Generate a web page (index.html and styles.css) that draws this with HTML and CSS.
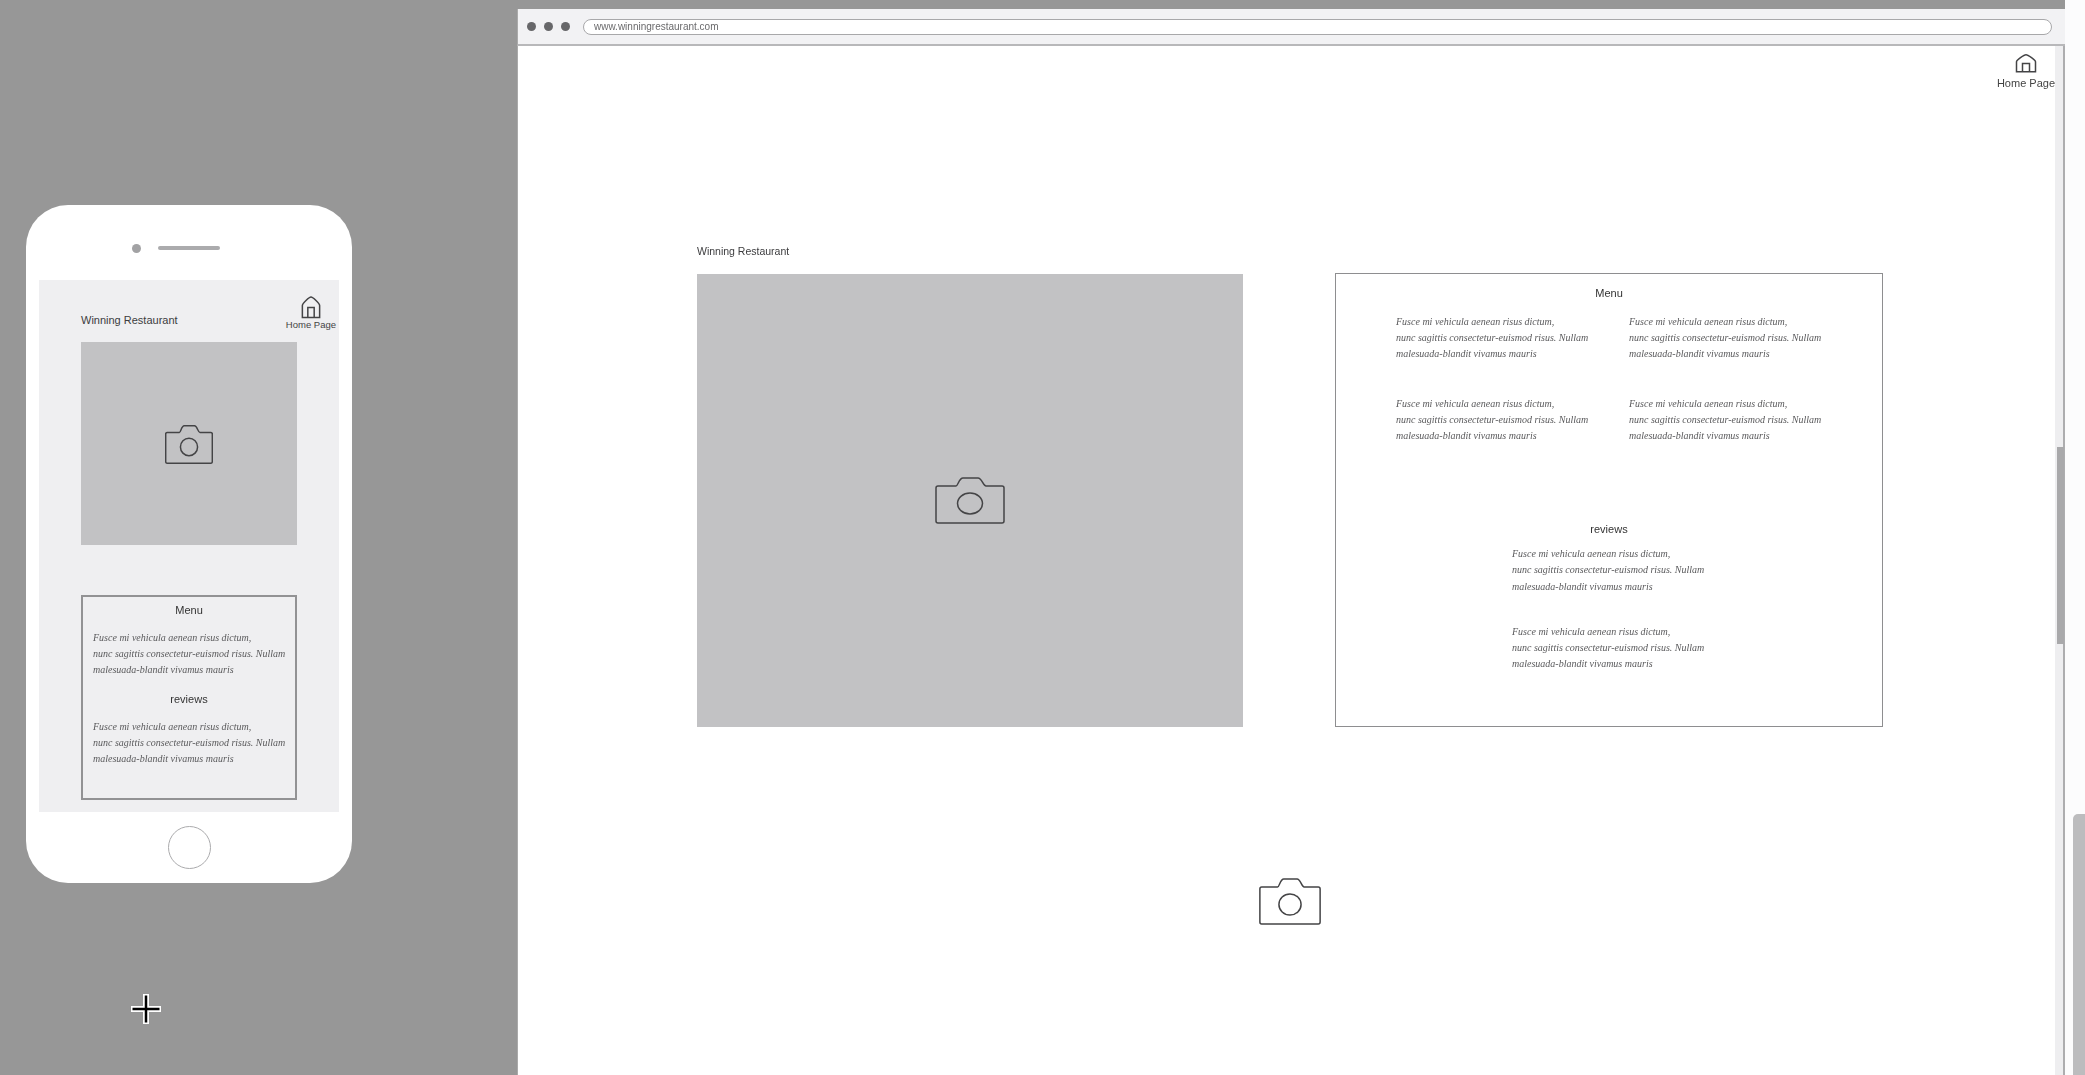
FILE: index.html
```html
<!DOCTYPE html>
<html lang="en">
<head>
<meta charset="utf-8">
<title>Winning Restaurant wireframe</title>
<link rel="stylesheet" href="styles.css">
</head>
<body>
<svg class="defs" width="0" height="0" aria-hidden="true">
  <symbol id="camera" viewBox="0 0 70 47" preserveAspectRatio="none">
    <path class="line" d="M3 9H21C23 9 24 1 28 1H43C47 1 48 9 51 9H67C68.500 9 69 10 69 11V44C69 45.500 68.500 46 67 46H3C1.500 46 1 45.500 1 44V11C1 10 1.500 9 3 9Z"/>
    <ellipse class="line" cx="35" cy="26.500" rx="12.500" ry="10.500"/>
  </symbol>
  <symbol id="house" viewBox="0 0 22 23" preserveAspectRatio="none">
    <path class="line" d="M1.500 21.500V9.500C1.500 7.500 9 1 11 1S20.500 7.500 20.500 9.500V21.500Z"/>
    <path class="line" d="M7.500 21.500V11.500H14.500V21.500"/>
  </symbol>
</svg>
<div class="stage">
  <div class="left">
    <div class="phone">
      <div class="phone-top">
        <span class="lens"></span>
        <span class="speaker"></span>
      </div>
      <div class="screen">
        <div class="phone-header">
          <div class="title">Winning Restaurant</div>
          <div class="home home-small">
            <svg class="icon-house-small"><use href="#house"/></svg>
            <span>Home Page</span>
          </div>
        </div>
        <div class="photo photo-small">
          <svg class="camera-small"><use href="#camera"/></svg>
        </div>
        <div class="panel panel-small">
          <div class="heading">Menu</div>
          <div class="copy">
            <span>Fusce mi vehicula aenean risus dictum,</span>
            <span>nunc sagittis consectetur-euismod risus. Nullam</span>
            <span>malesuada-blandit vivamus mauris</span>
          </div>
          <div class="heading heading-mid">reviews</div>
          <div class="copy">
            <span>Fusce mi vehicula aenean risus dictum,</span>
            <span>nunc sagittis consectetur-euismod risus. Nullam</span>
            <span>malesuada-blandit vivamus mauris</span>
          </div>
        </div>
      </div>
      <div class="phone-bottom"><span class="home-button"></span></div>
    </div>
  </div>
  <div class="browser">
    <div class="chrome">
      <div class="dots"><span></span><span></span><span></span></div>
      <div class="url">www.winningrestaurant.com</div>
    </div>
    <div class="viewport">
      <div class="track"><div class="thumb"></div></div>
      <div class="top-row">
        <div class="home home-large">
          <svg class="icon-house-large"><use href="#house"/></svg>
          <span>Home Page</span>
        </div>
      </div>
      <div class="content">
        <div class="title title-large">Winning Restaurant</div>
        <div class="columns">
          <div class="photo photo-large">
            <svg class="camera-large"><use href="#camera"/></svg>
          </div>
          <div class="panel panel-large">
            <div class="heading">Menu</div>
            <div class="menu-grid">
              <div class="copy">
                <span>Fusce mi vehicula aenean risus dictum,</span>
                <span>nunc sagittis consectetur-euismod risus. Nullam</span>
                <span>malesuada-blandit vivamus mauris</span>
              </div>
              <div class="copy">
                <span>Fusce mi vehicula aenean risus dictum,</span>
                <span>nunc sagittis consectetur-euismod risus. Nullam</span>
                <span>malesuada-blandit vivamus mauris</span>
              </div>
              <div class="copy">
                <span>Fusce mi vehicula aenean risus dictum,</span>
                <span>nunc sagittis consectetur-euismod risus. Nullam</span>
                <span>malesuada-blandit vivamus mauris</span>
              </div>
              <div class="copy">
                <span>Fusce mi vehicula aenean risus dictum,</span>
                <span>nunc sagittis consectetur-euismod risus. Nullam</span>
                <span>malesuada-blandit vivamus mauris</span>
              </div>
            </div>
            <div class="heading heading-reviews">reviews</div>
            <div class="review-list">
              <div class="copy">
                <span>Fusce mi vehicula aenean risus dictum,</span>
                <span>nunc sagittis consectetur-euismod risus. Nullam</span>
                <span>malesuada-blandit vivamus mauris</span>
              </div>
              <div class="copy">
                <span>Fusce mi vehicula aenean risus dictum,</span>
                <span>nunc sagittis consectetur-euismod risus. Nullam</span>
                <span>malesuada-blandit vivamus mauris</span>
              </div>
            </div>
          </div>
        </div>
      </div>
      <div class="lower">
        <svg class="camera-lower"><use href="#camera"/></svg>
      </div>
    </div>
  </div>
  <div class="gutter"><div class="gutter-bar"></div></div>
</div>
<svg class="cursor" viewBox="0 0 30 30" aria-hidden="true">
  <path class="cursor-halo" d="M15 0V30M0 15H30"/>
  <path class="cursor-core" d="M15 1.500V28.500M1.500 15H28.500"/>
</svg>
</body>
</html>
```
FILE: styles.css
```css
html, body {
  margin: 0;
  height: 100%;
  overflow: hidden;
  background: #979797;
}

.defs {
  position: absolute;
}

.line {
  fill: none;
  stroke: #444446;
  stroke-width: 1.5px;
  vector-effect: non-scaling-stroke;
}

.stage {
  display: flex;
  height: 1075px;
  overflow: hidden;
  font-family: "Liberation Sans", Arial, sans-serif;
  color: #333;
  filter: blur(0.55px);
}

.left {
  width: 517px;
  flex: none;
  box-sizing: border-box;
  padding: 205px 0 0 26px;
}

.phone {
  width: 326px;
  height: 678px;
  display: flex;
  flex-direction: column;
  background: #fff;
  border-radius: 42px;
}

.phone-top {
  height: 75px;
  flex: none;
  display: flex;
  align-items: center;
  justify-content: center;
  gap: 17px;
  padding-top: 11px;
  padding-right: 26px;
  box-sizing: border-box;
}

.lens {
  width: 9px;
  height: 9px;
  border-radius: 50%;
  background: #a2a2a4;
}

.speaker {
  width: 62px;
  height: 4px;
  border-radius: 2px;
  background: #ababad;
}

.screen {
  height: 532px;
  flex: none;
  margin: 0 13px;
  padding: 16px 3px 0 42px;
  box-sizing: border-box;
  background: #efeff1;
}

.phone-header {
  display: flex;
  justify-content: space-between;
  align-items: flex-end;
  height: 46px;
  padding-bottom: 11px;
  box-sizing: border-box;
}

.title {
  font-size: 11px;
  line-height: 14px;
  color: #3c3c3e;
  margin-bottom: 4px;
}

.title-large {
  font-size: 10.500px;
  margin-bottom: 16px;
}

.home {
  display: flex;
  flex-direction: column;
  align-items: center;
  color: #444;
}

.home-small {
  font-size: 9.500px;
  line-height: 12px;
}

.home-large {
  font-size: 11px;
  line-height: 14px;
  gap: 3px;
}

.icon-house-small {
  width: 20px;
  height: 23px;
}

.icon-house-large {
  width: 22px;
  height: 23px;
}

.photo {
  display: flex;
  align-items: center;
  justify-content: center;
  background: #c2c2c4;
}

.photo-small {
  width: 216px;
  height: 203px;
}

.camera-small {
  width: 48px;
  height: 39px;
  margin-top: 1px;
}

.panel {
  box-sizing: border-box;
}

.panel-small {
  width: 216px;
  height: 205px;
  margin-top: 50px;
  padding: 6px 10px 0;
  border: 2px solid #929294;
}

.heading {
  font-size: 11px;
  line-height: 14px;
  color: #333;
  text-align: center;
}

.heading-mid {
  margin: 13px 0;
}

.copy {
  display: flex;
  flex-direction: column;
  font-family: "Liberation Serif", "Times New Roman", serif;
  font-style: italic;
  font-size: 10px;
  line-height: 16.200px;
  color: #5a5a5c;
  white-space: nowrap;
}

.panel-small > .heading:first-child {
  margin-bottom: 13px;
}

.phone-bottom {
  flex: 1;
  display: flex;
  align-items: center;
  justify-content: center;
  padding-bottom: 1px;
}

.home-button {
  width: 43px;
  height: 43px;
  box-sizing: border-box;
  border: 1.500px solid #aaaaac;
  border-radius: 50%;
}

.browser {
  width: 1548px;
  flex: none;
  margin-top: 9px;
  display: flex;
  flex-direction: column;
  background: #fff;
}

.chrome {
  height: 37px;
  flex: none;
  box-sizing: border-box;
  display: flex;
  align-items: center;
  gap: 13px;
  padding: 0 13px 0 9px;
  background: #f2f2f4;
  border-bottom: 2px solid #b8b8ba;
  border-left: 1px solid #aaa;
}

.dots {
  display: flex;
  gap: 8px;
}

.dots span {
  width: 9px;
  height: 9px;
  border-radius: 50%;
  background: #676769;
}

.url {
  flex: 1;
  height: 16px;
  box-sizing: border-box;
  padding-left: 10px;
  border: 1.500px solid #a8a8aa;
  border-radius: 8px;
  background: #fff;
  font-size: 10px;
  line-height: 13px;
  color: #6a6a6c;
}

.viewport {
  flex: 1;
  position: relative;
  padding-top: 8px;
  border-left: 1px solid #aaa;
}

.track {
  position: absolute;
  top: 0;
  right: 0;
  bottom: 0;
  width: 8px;
  background: #eeeef0;
  border-right: 2px solid #adadaf;
}

.thumb {
  width: 7px;
  height: 197px;
  margin: 401px 0 0 2px;
  background: #a9a9ab;
}

.top-row {
  height: 36px;
  display: flex;
  justify-content: flex-end;
  padding-right: 10px;
}

.content {
  margin-top: 154px;
  padding-left: 179px;
}

.columns {
  display: flex;
  gap: 92px;
}

.photo-large {
  width: 546px;
  height: 453px;
}

.camera-large {
  width: 70px;
  height: 47px;
}

.panel-large {
  width: 548px;
  height: 454px;
  margin-top: -1px;
  padding-top: 12px;
  border: 1.500px solid #8e8e90;
}

.menu-grid {
  display: grid;
  grid-template-columns: 233px 233px;
  row-gap: 33px;
  margin-top: 14px;
  padding-left: 60px;
}

.heading-reviews {
  margin-top: 78px;
}

.review-list {
  display: flex;
  flex-direction: column;
  gap: 29px;
  margin-top: 10px;
  padding-left: 176px;
}

.lower {
  display: flex;
  justify-content: center;
  margin-top: 151px;
  padding-right: 3px;
}

.camera-lower {
  width: 62px;
  height: 47px;
}

.gutter {
  flex: 1;
  display: flex;
  flex-direction: column;
  justify-content: flex-end;
  align-items: flex-end;
  background: #fcfcfd;
}

.gutter-bar {
  width: 12px;
  height: 261px;
  background: #bcbcbe;
  border-top-left-radius: 5px;
}

.cursor {
  position: absolute;
  left: 131px;
  top: 994px;
  width: 30px;
  height: 30px;
}

.cursor-halo {
  fill: none;
  stroke: #fff;
  stroke-width: 6px;
}

.cursor-core {
  fill: none;
  stroke: #000;
  stroke-width: 2.500px;
}
```
